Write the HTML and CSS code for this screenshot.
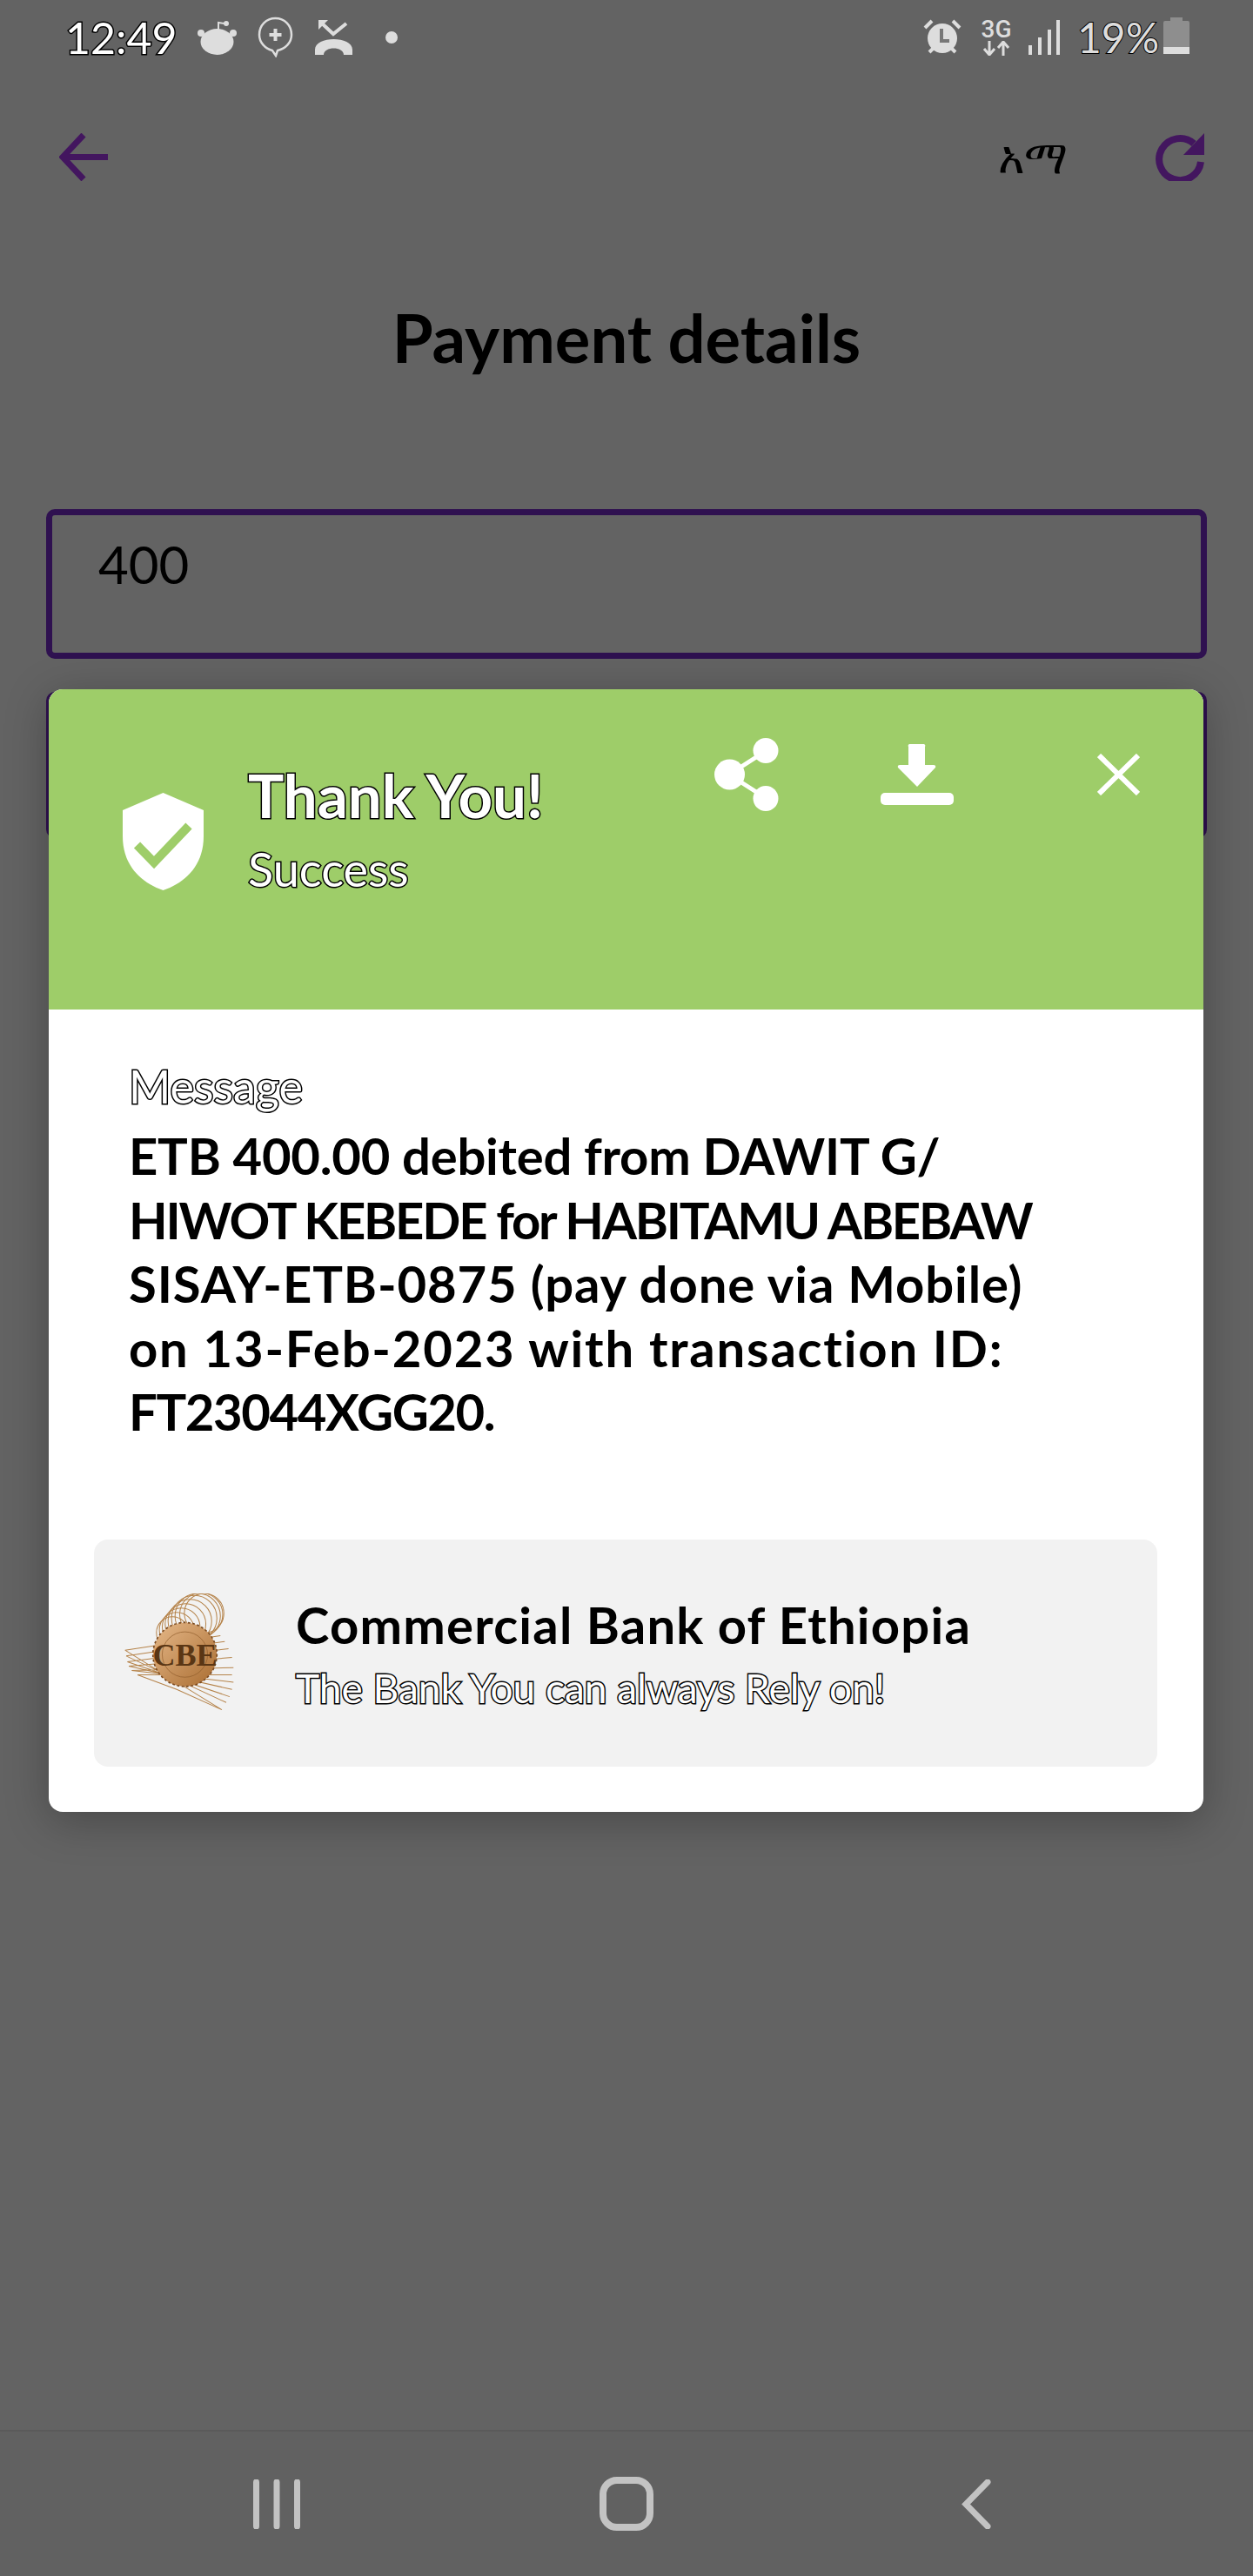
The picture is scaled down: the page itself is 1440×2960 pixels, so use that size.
FILE: index.html
```html
<!DOCTYPE html>
<html lang="en">
<head>
    <meta charset="UTF-8">
    <title>Payment details</title>
    <link rel="stylesheet" href="styles.css">
</head>
<body>
<div class="screen">
    <!-- status bar -->
    <div class="statusbar">
        <span class="time outlined">12:49</span>
        <svg class="st-reddit" viewBox="0 0 45 40"><path d="M24 12V3l7 1" fill="none" stroke="#ddd" stroke-width="2"/><circle cx="33" cy="4" r="3" fill="#ddd"/><circle cx="4" cy="15" r="4" fill="#ddd"/><circle cx="41" cy="15" r="4" fill="#ddd"/><ellipse cx="22.500" cy="25" rx="19" ry="15" fill="#ddd"/></svg>
        <svg class="st-bubble" viewBox="0 0 41 47"><path d="M20.500 2C10 2 2 10 2 21c0 9 7 16 15 18l4 6 2-6c9-2 16-9 16-18C39 10 31 2 20.500 2Z" fill="none" stroke="#ddd" stroke-width="2.500"/><path d="M20.500 14v14M13.500 21h14" stroke="#ddd" stroke-width="4"/></svg>
        <svg class="st-missed" viewBox="0 0 43 40"><path d="M7 3L21 16 36 4" fill="none" stroke="#ddd" stroke-width="4"/><path d="M4 0h11L4 11Z" fill="#ddd"/><path d="M0 40V34C0 18 43 18 43 34V40H33C33 30 10 30 10 40Z" fill="#ddd"/></svg>
        <span class="st-dot"></span>
        <div class="st-right">
            <svg class="st-alarm" viewBox="0 0 46 42"><circle cx="23" cy="22" r="17" fill="#ddd"/><path d="M3 10L11 2M43 10L35 2M8 38l4-4M38 38l-4-4" stroke="#ddd" stroke-width="4"/><path d="M22 11v14h9" fill="none" stroke="#777" stroke-width="4"/></svg>
            <span class="st-net"><span class="st-3g">3G</span><svg viewBox="0 0 32 17"><path d="M8 0v14M2 9l6 7 6-7M24 17V3M18 8l6-7 6 7" fill="none" stroke="#ddd" stroke-width="3"/></svg></span>
            <svg class="st-signal" viewBox="0 0 38 40"><path d="M2 40V29h4v11ZM13 40V20h4v20ZM24 40V11h4v29ZM34 40V0h4v40Z" fill="#ddd"/></svg>
            <span class="battery-text outlined">19%</span>
            <span class="battery"><span class="battery-level"></span></span>
        </div>
    </div>

    <!-- app bar -->
    <div class="appbar">
        <svg class="appbar-icon" viewBox="0 0 56 55"><path d="M4 27.500H56M28 2L4 27.500 28 53" fill="none" stroke="#43165f" stroke-width="7"/></svg>
        <span class="lang">አማ</span>
        <svg class="appbar-icon" viewBox="0 0 56 55"><path d="M44 12A24 24 0 1 0 52 33" fill="none" stroke="#43165f" stroke-width="8"/><path d="M56 0V25H32Z" fill="#43165f"/></svg>
    </div>

    <h1 class="page-title">Payment details</h1>

    <div class="amount-field">400</div>
    <div class="pay-button"></div>

    <!-- result dialog -->
    <section class="dialog">
        <div class="dialog-head">
            <svg class="shield" viewBox="0 0 93 112"><path d="M46.500 0L93 20V50C93 85 70 104 46.500 112 23 104 0 85 0 50V20Z" fill="#fff"/><path d="M16.500 60L36 80 76 38" fill="none" stroke="#9ecd69" stroke-width="10"/></svg>
            <div class="head-text">
                <div class="thanks outlined">Thank You!</div>
                <div class="success outlined">Success</div>
            </div>
            <div class="head-actions">
                <svg class="act-share" viewBox="0 0 74 84"><path d="M59 15L17 42 59 69" fill="none" stroke="#fff" stroke-width="5"/><circle cx="59" cy="14.500" r="14.500" fill="#fff"/><circle cx="17.500" cy="42" r="17.500" fill="#fff"/><circle cx="59" cy="69.500" r="14.500" fill="#fff"/></svg>
                <svg class="act-save" viewBox="0 0 84 70"><path d="M32 3a2 2 0 0 1 2-3h15a2 2 0 0 1 2 3V24h10q3 0 2 3L42 49 20 27q-1-3 2-3H32Z" fill="#fff"/><rect y="56" width="84" height="14" rx="5" fill="#fff"/></svg>
                <svg class="act-close" viewBox="0 0 49 48"><path d="M2 2L47 46M47 2L2 46" stroke="#fff" stroke-width="6"/></svg>
            </div>
        </div>
        <div class="dialog-body">
            <div class="msg-label outlined">Message</div>
            <p class="msg-text">
                <span class="msg-line line-1">ETB 400.00 debited from DAWIT G/</span>
                <span class="msg-line line-2">HIWOT KEBEDE for HABITAMU ABEBAW</span>
                <span class="msg-line line-3">SISAY-ETB-0875 (pay done via Mobile)</span>
                <span class="msg-line line-4">on 13-Feb-2023 with transaction ID:</span>
                <span class="msg-line line-5">FT23044XGG20.</span>
            </p>
            <div class="bank-card">
                <svg class="bank-logo" viewBox="70 70 380 410">
                    <defs>
                        <linearGradient id="coin" x1="0" y1="0" x2="1" y2="1">
                            <stop offset="0" stop-color="#e6b98a"/>
                            <stop offset="1" stop-color="#a96c30"/>
                        </linearGradient>
                    </defs>
                    <g fill="none" stroke="#b5834a" stroke-width="3">
                        <circle cx="235" cy="205" r="55"/><circle cx="250" cy="195" r="60"/><circle cx="265" cy="185" r="65"/><circle cx="280" cy="175" r="70"/><circle cx="295" cy="165" r="75"/><circle cx="310" cy="155" r="78"/><circle cx="322" cy="148" r="78"/><circle cx="334" cy="142" r="74"/><circle cx="344" cy="138" r="68"/>
                        <path d="M72 265L405 470M76 285L420 445M80 305L432 425M85 320L440 400M95 335L445 375M115 350L440 350M72 265L400 215M76 285L415 235M80 305L428 260M85 320L440 290M95 335L445 325M115 350L250 400 405 470"/>
                    </g>
                    <circle cx="278" cy="280" r="110" fill="url(#coin)"/>
                    <circle cx="278" cy="280" r="78" fill="none" stroke="#8e5b2a" stroke-width="2"/>
                    <circle cx="278" cy="280" r="110" fill="none" stroke="#7a4a20" stroke-width="5" stroke-dasharray="8 8"/>
                    <text x="278" y="318" class="bank-logo-text">CBE</text>
                </svg>
                <div class="bank-text">
                    <div class="bank-name">Commercial Bank of Ethiopia</div>
                    <div class="bank-motto outlined">The Bank You can always Rely on!</div>
                </div>
            </div>
        </div>
    </section>

    <!-- system nav -->
    <div class="navbar">
        <svg class="nav-recent" viewBox="0 0 54 57"><path d="M3.500 3V54M27 3V54M50.500 3V54" stroke="#c3c3c3" stroke-width="7" stroke-linecap="round"/></svg>
        <span class="nav-home"></span>
        <svg class="nav-back" viewBox="0 0 34 57"><path d="M30 3L5 28.500 30 54" fill="none" stroke="#c3c3c3" stroke-width="7" stroke-linecap="round"/></svg>
    </div>
</div>
</body>
</html>
```

FILE: styles.css
```css
* {
    margin: 0;
    padding: 0;
    box-sizing: border-box;
}

body {
    font-family: Lato, "Noto Sans", sans-serif;
    background-color: #636363;
    color: #000;
}

svg {
    display: block;
    flex: none;
}

.screen {
    position: relative;
    display: flex;
    flex-direction: column;
    height: 2960px;
}

/* white letters with a black edge, the phone font does this */
.outlined {
    color: #fff;
    -webkit-text-stroke: 3px #000;
    paint-order: stroke fill;
}

/* Status bar */
.statusbar {
    display: flex;
    align-items: center;
    height: 85px;
    padding: 0 73px 0 75px;
}

.time {
    font-size: 50px;
    line-height: 1;
    width: 127px;
}

.st-reddit {
    width: 45px;
    height: 40px;
    margin-left: 25px;
}

.st-bubble {
    width: 41px;
    height: 47px;
    margin-left: 24px;
}

.st-missed {
    width: 43px;
    height: 40px;
    margin-left: 25px;
}

.st-dot {
    width: 14px;
    height: 14px;
    margin-left: 38px;
    border-radius: 50%;
    background-color: #ddd;
}

.st-right {
    display: flex;
    align-items: center;
    margin-left: auto;
}

.st-alarm {
    width: 46px;
    height: 42px;
}

.st-net {
    display: flex;
    flex-direction: column;
    align-items: center;
    width: 32px;
    margin-left: 23px;
}

.st-net svg {
    width: 32px;
    height: 17px;
}

.st-3g {
    font-family: Roboto, sans-serif;
    font-size: 28px;
    font-weight: 500;
    line-height: 26px;
    color: #ddd;
}

.st-signal {
    width: 38px;
    height: 40px;
    margin-left: 19px;
}

.battery-text {
    width: 90px;
    margin-left: 20px;
    font-size: 48px;
    line-height: 1;
    color: #ddd;
    -webkit-text-stroke-width: 2px;
}

.battery {
    position: relative;
    display: flex;
    align-items: flex-end;
    width: 30px;
    height: 38px;
    margin-left: 9px;
    background-color: #8e8e8e;
    border-radius: 2px;
}

.battery::before {
    content: "";
    position: absolute;
    top: -4px;
    left: 8px;
    width: 14px;
    height: 4px;
    background-color: #8e8e8e;
}

.battery-level {
    width: 100%;
    height: 8px;
    background-color: #ddd;
}

/* App bar */
.appbar {
    display: flex;
    align-items: center;
    height: 55px;
    margin-top: 68px;
    padding: 0 56px 0 68px;
}

.appbar-icon {
    width: 56px;
    height: 55px;
}

.lang {
    margin-left: auto;
    margin-right: 101px;
    font-family: "DejaVu Sans", "Noto Sans", sans-serif;
    font-size: 52px;
    line-height: 1;
}

.page-title {
    margin-top: 135px;
    font-size: 76px;
    font-weight: 700;
    line-height: 90px;
    text-align: center;
}

.amount-field {
    height: 172px;
    margin: 152px 53px 0;
    padding: 26px 53px;
    border: 7px solid #2f1150;
    border-radius: 10px;
    font-size: 60px;
    line-height: 60px;
}

.pay-button {
    height: 168px;
    margin: 38px 53px 0;
    background-color: #2f1150;
    border-radius: 10px;
}

/* Dialog over the page */
.dialog {
    position: absolute;
    top: 792px;
    left: 56px;
    width: 1327px;
    height: 1290px;
    border-radius: 16px;
    background-color: #fff;
    box-shadow: 0 10px 50px rgba(0, 0, 0, 0.28);
    overflow: hidden;
}

.dialog-head {
    display: flex;
    align-items: flex-start;
    height: 368px;
    background-color: #9ecd69;
}

.shield {
    width: 93px;
    height: 112px;
    margin: 119px 0 0 85px;
}

.head-text {
    margin: 82px 0 0 51px;
}

.thanks {
    font-size: 69px;
    font-weight: 700;
    line-height: 80px;
}

.success {
    margin-top: 18px;
    font-size: 54px;
    line-height: 54px;
}

.head-actions {
    display: flex;
    align-items: center;
    height: 84px;
    margin: 56px 73px 0 auto;
}

.act-share {
    width: 74px;
    height: 84px;
}

.act-save {
    width: 84px;
    height: 70px;
    margin-left: 117px;
}

.act-close {
    width: 49px;
    height: 48px;
    margin-left: 165px;
}

.dialog-body {
    padding: 60px 53px 53px 52px;
}

.msg-label {
    margin-left: 40px;
    font-size: 52px;
    line-height: 56px;
}

.msg-text {
    margin: 15px 0 0 40px;
    font-size: 58px;
    font-weight: 700;
    line-height: 73.500px;
}

/* the lines are fitted one by one to the widths in the reference */
.msg-line {
    display: block;
    white-space: nowrap;
}

.line-1 {
    letter-spacing: -0.230px;
}

.line-2 {
    letter-spacing: -2.200px;
}

.line-3 {
    letter-spacing: 0.900px;
}

.line-4 {
    letter-spacing: 1.800px;
}

.line-5 {
    letter-spacing: -1.400px;
}

/* Bank card at the bottom of the dialog */
.bank-card {
    display: flex;
    align-items: center;
    height: 261px;
    margin-top: 110px;
    padding-left: 35px;
    background-color: #f2f2f2;
    border-radius: 16px;
}

.bank-logo {
    width: 127px;
    height: 137px;
}

.bank-logo-text {
    font-family: "Liberation Serif", serif;
    font-size: 108px;
    font-weight: 700;
    text-anchor: middle;
    fill: #5a3614;
}

.bank-text {
    margin-left: 70px;
}

.bank-name {
    font-size: 58px;
    font-weight: 700;
    letter-spacing: 1.200px;
    line-height: 70px;
}

.bank-motto {
    margin-top: 12px;
    font-size: 46px;
    line-height: 52px;
}

/* System navigation */
.navbar {
    position: absolute;
    left: 0;
    right: 0;
    bottom: 0;
    display: flex;
    align-items: center;
    height: 168px;
    padding: 0 301px 0 291px;
    border-top: 2px solid #5a5a5a;
    background-color: #616161;
}

.nav-recent {
    width: 54px;
    height: 57px;
}

.nav-home {
    width: 62px;
    height: 62px;
    margin-left: 344px;
    border: 8px solid #c3c3c3;
    border-radius: 20px;
}

.nav-back {
    width: 34px;
    height: 57px;
    margin-left: auto;
}
```
